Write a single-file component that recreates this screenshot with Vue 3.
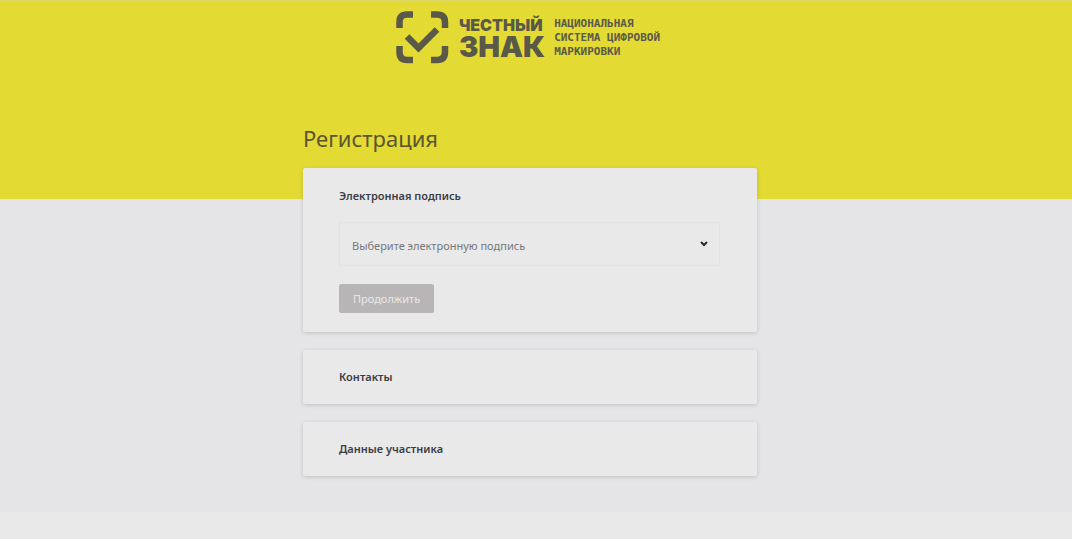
<template>
	<div class="page">
		<div class="content">
			<header class="logo">
				<svg class="logo-mark" viewBox="0 0 53 53" fill="none" stroke="#5a5848" stroke-width="6.5">
					<path d="M3.5 17V11Q3.5 3.5 11 3.5H17 M35 3.5H41Q49 3.5 49 11V17 M49 35V41Q49 49 41 49H35 M17 49H11Q3.5 49 3.5 41V35" />
					<path d="M11 25.5L22.5 37L41 18.5" />
				</svg>
				<div class="logo-name">
					<span class="name-top">ЧЕСТНЫЙ</span>
					<span class="name-bottom">ЗНАК</span>
				</div>
				<div class="logo-caption">
					<span>НАЦИОНАЛЬНАЯ</span>
					<span>СИСТЕМА ЦИФРОВОЙ</span>
					<span>МАРКИРОВКИ</span>
				</div>
			</header>

			<h1>Регистрация</h1>

			<main class="steps">
				<form class="card" @submit.prevent>
					<h2><label for="signature">Электронная подпись</label></h2>
					<div class="select-field">
						<select id="signature" v-model="signature">
							<option value="">Выберите электронную подпись</option>
						</select>
						<svg class="chevron" viewBox="0 0 8 6" fill="none" stroke="#2b2b2e" stroke-width="2">
							<path d="M1 1L4 4L7 1" />
						</svg>
					</div>
					<button type="submit" :disabled="!signature">Продолжить</button>
				</form>
				<section v-for="step in steps" :key="step" class="card">
					<h2>{{ step }}</h2>
				</section>
			</main>
		</div>
	</div>
</template>

<script setup>
import { ref } from 'vue'

const signature = ref('')
const steps = ['Контакты', 'Данные участника']
</script>

<style>
body {
	margin: 0;
	background: #e9e9e9;
}
</style>

<style scoped>
.page {
	box-sizing: border-box;
	padding: 10px 12px 36px 0;
	border-top: 1px solid #dcd766;
	background: linear-gradient(#e3db33, #e3db33) top / 100% 198px no-repeat #e5e5e8;
	font-family: 'Noto Sans', 'Open Sans', sans-serif;
	color: #3c3c44;
}

.content {
	max-width: 454px;
	margin: 0 auto;
}

.logo {
	display: flex;
	justify-content: center;
	padding-right: 4px;
	color: #5a5848;
}

.logo-mark {
	width: 53px;
	height: 53px;
	margin-right: 10px;
}

.logo-name {
	display: flex;
	flex-direction: column;
	padding-top: 5px;
	margin-right: 9px;
	font-family: Inter, sans-serif;
	font-weight: 900;
}

.name-top {
	font-size: 16px;
	line-height: 18px;
}

.name-bottom {
	font-size: 29px;
	line-height: 26px;
}

.logo-caption {
	display: flex;
	flex-direction: column;
	padding-top: 6px;
	font-family: 'DejaVu Sans Mono', monospace;
	font-size: 11px;
	font-weight: 700;
	line-height: 14px;
}

h1 {
	margin: 58px 0 13px;
	font-size: 22px;
	font-weight: 400;
	line-height: 33px;
	color: #5a5530;
}

.steps {
	display: flex;
	flex-direction: column;
	gap: 18px;
}

.card {
	padding: 17px 37px 17px 36px;
	background: #e9e9e9;
	border-radius: 2px;
	box-shadow: 0 1px 4px rgba(0, 0, 0, 0.16);
}

form.card {
	padding-top: 18px;
	padding-bottom: 19px;
}

h2 {
	margin: 0;
	font-size: 11px;
	font-weight: 600;
	line-height: 20px;
}

.select-field {
	position: relative;
	margin: 16px 0 18px;
}

select {
	display: block;
	box-sizing: border-box;
	width: 100%;
	height: 44px;
	padding: 2px 36px 0 12px;
	border: 1px solid #e2e2e2;
	border-radius: 2px;
	appearance: none;
	background: transparent;
	font-family: inherit;
	font-size: 11px;
	color: #77777a;
}

.chevron {
	position: absolute;
	top: 19px;
	right: 12px;
	width: 8px;
	height: 6px;
	pointer-events: none;
}

button {
	display: block;
	height: 29px;
	padding: 0 14px;
	border: none;
	border-radius: 2px;
	background: #b7b5b6;
	font-family: inherit;
	font-size: 11px;
	color: #e9e9e9;
}
</style>
